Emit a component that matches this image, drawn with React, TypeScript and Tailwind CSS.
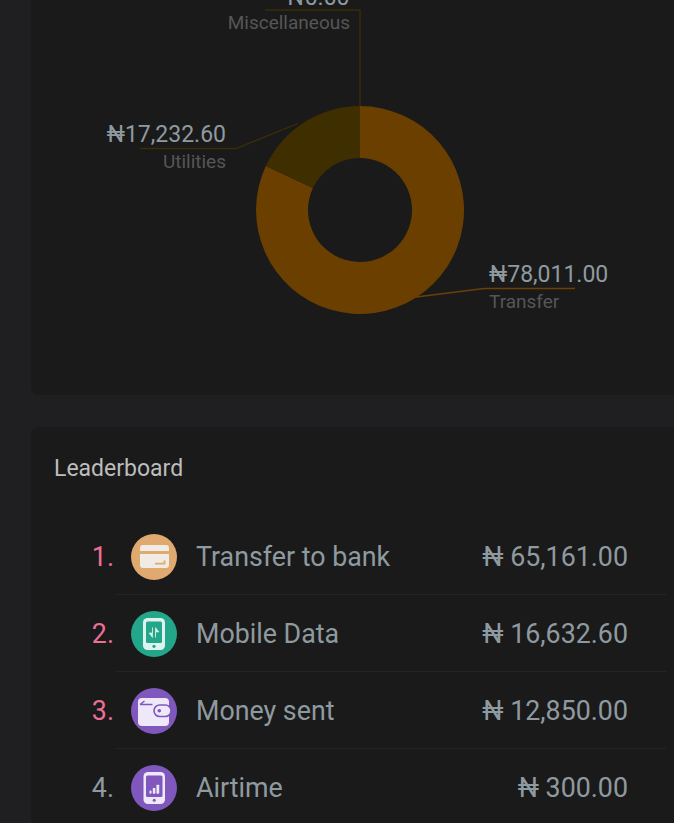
import React from "react";

function CardIcon() {
  return (
    <svg viewBox="0 0 46 46" className="w-[46px] h-[46px] block">
      <circle cx="23" cy="23" r="23" fill="#dfa96f" />
      <path d="M9 14a3 3 0 0 1 3-3h23a3 3 0 0 1 3 3v3H9z" fill="#f0ebe4" />
      <path d="M9 20h29v11a3 3 0 0 1-3 3H12a3 3 0 0 1-3-3z" fill="#f0ebe4" />
      <path d="M24 29.600h9.500v-3" fill="none" stroke="#dfa96f" strokeWidth="1.800" />
    </svg>
  );
}

function DataIcon() {
  return (
    <svg viewBox="0 0 46 46" className="w-[46px] h-[46px] block">
      <circle cx="23" cy="23" r="23" fill="#23a68a" />
      <rect x="12" y="7" width="22" height="32" rx="4.500" fill="#dff3ee" />
      <rect x="15" y="10.500" width="16" height="21.500" rx="1.500" fill="#23a68a" />
      <circle cx="23" cy="35.300" r="1.600" fill="#23a68a" />
      <path d="M21.500 16.500v10l-3.400-4.500h3.400zM24.500 26.500v-10l3.400 4.500h-3.400z" fill="#dff3ee" stroke="#dff3ee" strokeWidth=".6" strokeLinejoin="round" />
    </svg>
  );
}

function WalletIcon() {
  return (
    <svg viewBox="0 0 46 46" className="w-[46px] h-[46px] block">
      <circle cx="23" cy="23" r="23" fill="#7f57bd" />
      <rect x="7" y="10" width="31" height="28" rx="4" fill="#efe8f9" />
      <path d="M9 16.500h12.500M9 16.500l4.500-3.500" fill="none" stroke="#7f57bd" strokeWidth="1.500" />
      <rect x="23" y="17" width="17" height="11.500" rx="5.700" fill="#efe8f9" stroke="#7f57bd" strokeWidth="1.600" />
      <circle cx="28.300" cy="22.700" r="1.800" fill="#7f57bd" />
    </svg>
  );
}

function AirtimeIcon() {
  return (
    <svg viewBox="0 0 46 46" className="w-[46px] h-[46px] block">
      <circle cx="23" cy="23" r="23" fill="#7f57bd" />
      <rect x="12.500" y="7" width="21.500" height="32" rx="4.500" fill="#efe8f9" />
      <rect x="15" y="10.500" width="16.500" height="21.500" rx="1.500" fill="#7f57bd" />
      <circle cx="23.200" cy="35.300" r="1.500" fill="#7f57bd" />
      <rect x="18.500" y="25.500" width="2" height="3.200" rx=".6" fill="#efe8f9" />
      <rect x="21.800" y="23" width="2.600" height="5.700" rx=".6" fill="#efe8f9" />
      <rect x="25.500" y="19.700" width="2.700" height="9" rx=".6" fill="#efe8f9" />
    </svg>
  );
}

function Donut() {
  return (
    <svg viewBox="0 0 643 395" className="block w-full h-[395px]">
      <g transform="translate(-31 0)" fontFamily="Roboto, sans-serif">
        <path d="M360 106a104 104 0 1 1-94.200 60L312.900 188A52 52 0 1 0 360 158z" fill="#6b3f00" />
        <path d="M360 106a104 104 0 0 0-94.200 60L312.900 188A52 52 0 0 1 360 158z" fill="#3f2e00" />
        <path d="M265 10h95v96" fill="none" stroke="#3a2d07" strokeWidth="1.300" />
        <path d="M140 148.500h96l62-25" fill="none" stroke="#3a2d07" strokeWidth="1.300" />
        <path d="M416 297l68-8.500h91" fill="none" stroke="#6b4108" strokeWidth="1.300" />
        <text x="349.500" y="5" textAnchor="end" fontSize="23" fill="#8f9aa0">₦0.00</text>
        <text x="350" y="29" textAnchor="end" fontSize="19" fill="#565656">Miscellaneous</text>
        <text x="226" y="142" textAnchor="end" fontSize="23" fill="#8f9aa0">₦17,232.60</text>
        <text x="226" y="168" textAnchor="end" fontSize="19" fill="#565656">Utilities</text>
        <text x="489" y="282" fontSize="23" fill="#8f9aa0">₦78,011.00</text>
        <text x="489" y="308" fontSize="19" fill="#565656">Transfer</text>
      </g>
    </svg>
  );
}

const rows = [
  { n: "1.", color: "text-[#f06e96]", icon: <CardIcon />, label: "Transfer to bank", amt: "₦ 65,161.00" },
  { n: "2.", color: "text-[#f06e96]", icon: <DataIcon />, label: "Mobile Data", amt: "₦ 16,632.60" },
  { n: "3.", color: "text-[#f06e96]", icon: <WalletIcon />, label: "Money sent", amt: "₦ 12,850.00" },
  { n: "4.", color: "text-[#8f9aa0]", icon: <AirtimeIcon />, label: "Airtime", amt: "₦ 300.00" },
];

export default function App() {
  return (
    <div className="font-['Roboto',sans-serif] w-[674px] h-[823px] overflow-hidden bg-[#1f1f22] pl-[31px] flex flex-col gap-[32px]">
      <div className="h-[395px] shrink-0 bg-[#1a1a1a] rounded-bl-lg overflow-hidden">
        <Donut />
      </div>
      <div className="shrink-0 bg-[#1a1a1a] rounded-l-lg pt-[27px]">
        <h2 className="pl-[23px] text-[23px] leading-[30px] font-normal text-[#bdbdbd]">Leaderboard</h2>
        <div className="mt-[34px]">
          {rows.map((r, i) => (
            <div key={r.n} className="flex items-center h-[77px] relative">
              <span className={`w-[83px] pt-[2px] text-right text-[26.8px] ${r.color}`}>{r.n}</span>
              <span className="ml-[17px] shrink-0">{r.icon}</span>
              <span className="ml-[19px] pt-[2px] text-[26.8px] text-[#8f9aa0]">{r.label}</span>
              <span className="ml-auto mr-[46px] pt-[2px] text-[26.8px] text-[#8f9aa0]">{r.amt}</span>
              {i < 3 && <div className="absolute left-[84px] w-[551px] bottom-0 h-px bg-[#242424]" />}
            </div>
          ))}
        </div>
      </div>
    </div>
  );
}
